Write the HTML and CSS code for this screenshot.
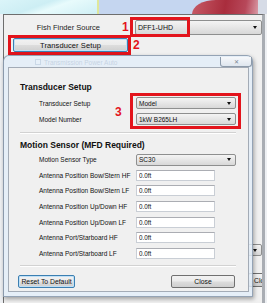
FILE: index.html
```html
<!DOCTYPE html>
<html lang="en">
<head>
    <meta charset="UTF-8">
    <meta name="viewport" content="width=device-width, initial-scale=1.0">
    <title>Transducer Setup</title>
    <link rel="stylesheet" href="styles.css">
</head>
<body>
    <div class="desktop">
        <div class="wallpaper">
            <span class="wp-sky"></span>
            <span class="wp-line"></span>
            <span class="wp-blue"></span>
            <span class="wp-red"></span>
            <span class="wp-end"></span>
        </div>

        <!-- back window -->
        <div class="main-window">
            <div class="source-row">
                <span class="source-label">Fish Finder Source</span>
                <div class="combo combo-source"><span>DFF1-UHD</span><i class="arrow"></i></div>
            </div>
            <button class="btn btn-setup">Transducer Setup</button>
            <div class="check-row"><span class="check"></span>Transmission Power Auto</div>
            <div class="combo combo-back"><span></span><i class="arrow"></i></div>
            <button class="btn btn-back-close">Close</button>

            <div class="mark mark-box1"></div>
            <div class="mark mark-box2"></div>
            <span class="mark-num num1">1</span>
            <span class="mark-num num2">2</span>
        </div>

        <!-- dialog -->
        <div class="dialog">
            <div class="titlebar">
                <span class="close-btn">&#10005;</span>
            </div>
            <div class="client">
                <h3 class="group-title">Transducer Setup</h3>
                <div class="form-grid transducer-grid">
                    <label>Transducer Setup</label>
                    <div class="combo"><span>Model</span><i class="arrow"></i></div>
                    <label>Model Number</label>
                    <div class="combo"><span>1kW B265LH</span><i class="arrow"></i></div>
                </div>
                <hr class="sep">

                <h3 class="group-title second">Motion Sensor (MFD Required)</h3>
                <div class="form-grid motion-grid">
                    <label>Motion Sensor Type</label>
                    <div class="combo"><span>SC30</span><i class="arrow"></i></div>
                    <label>Antenna Position Bow/Stern HF</label>
                    <input class="field" type="text" value="0.0ft">
                    <label>Antenna Position Bow/Stern LF</label>
                    <input class="field" type="text" value="0.0ft">
                    <label>Antenna Position Up/Down HF</label>
                    <input class="field" type="text" value="0.0ft">
                    <label>Antenna Position Up/Down LF</label>
                    <input class="field" type="text" value="0.0ft">
                    <label>Antenna Port/Starboard HF</label>
                    <input class="field" type="text" value="0.0ft">
                    <label>Antenna Port/Starboard LF</label>
                    <input class="field" type="text" value="0.0ft">
                </div>
                <hr class="sep sep-bottom">

                <div class="footer">
                    <button class="btn btn-reset">Reset To Default</button>
                    <button class="btn btn-close">Close</button>
                </div>

                <div class="mark mark-box3"></div>
                <span class="mark-num num3">3</span>
            </div>
        </div>
    </div>
</body>
</html>
```

FILE: styles.css
```css
body {
    margin: 0;
    font-family: "Liberation Sans", Arial, sans-serif;
}

.desktop {
    position: relative;
    width: 267px;
    height: 303px;
    overflow: hidden;
    background: #eef0f3;
}

/* wallpaper strip above the windows */
.wallpaper {
    display: flex;
    height: 14px;
    background: #c5d6f0;
}

.wp-sky {
    width: 97px;
    background: linear-gradient(160deg, #dbf5f9 0%, #cdeef4 40%, #e8fbfc 55%, #cfeff5 100%);
}

.wp-line {
    width: 2px;
    background: #dfe79a;
}

.wp-blue {
    width: 93px;
    background: #c5d6f0;
}

.wp-red {
    width: 66px;
    background: linear-gradient(100deg, #c65a66, #a92d3d 50%, #b7485a 80%, #d99aa6);
    border-top-left-radius: 24px 14px;
}

.wp-end {
    flex: 1;
    background: #d6dbe6;
}

/* back window */
.main-window {
    position: absolute;
    left: 3px;
    top: 14px;
    width: 262px;
    height: 289px;
    box-sizing: border-box;
    border-top: 1px solid #6e6e6e;
    border-left: 1px solid #6e6e6e;
    border-right: 3px solid #a9adb3;
    background: #f0f0f0;
    overflow: hidden;
}

.source-row {
    display: flex;
    align-items: center;
    height: 16px;
    margin-top: 4px;
    font-size: 7.5px;
    color: #1e1e1e;
}

.source-label {
    width: 96px;
    text-align: right;
}

.combo {
    box-sizing: border-box;
    display: flex;
    align-items: center;
    justify-content: space-between;
    width: 100px;
    height: 12px;
    padding: 0 4px 0 2px;
    border: 1px solid #8e8f8f;
    border-radius: 2px;
    background: linear-gradient(#f4f4f4, #e6e6e6 50%, #d8d8d8);
    font-size: 6.5px;
    color: #111;
}

.combo-source {
    margin-left: 35px;
    width: 127px;
    height: 15px;
    font-size: 7px;
}

.arrow {
    width: 0;
    height: 0;
    border-left: 2.5px solid transparent;
    border-right: 2.5px solid transparent;
    border-top: 3px solid #111;
}

.btn {
    box-sizing: border-box;
    padding: 0;
    border: 1px solid #707070;
    border-radius: 2px;
    background: linear-gradient(#f2f2f2, #ebebeb 48%, #dddddd 52%, #cfcfcf);
    font-family: "Liberation Sans", Arial, sans-serif;
    color: #111;
}

.btn-setup {
    display: block;
    margin: 3px 0 0 9px;
    width: 115px;
    height: 14px;
    border-color: #3c7fb1;
    box-shadow: inset 0 0 0 1px #bfe0f7;
    font-size: 7.5px;
    letter-spacing: 0.1px;
}

.check-row {
    display: flex;
    align-items: center;
    gap: 3px;
    height: 8px;
    margin: 6px 0 0 31px;
    font-size: 6.5px;
    color: #28406a;
}

.check {
    width: 4px;
    height: 4px;
    border: 1px solid #4a6a90;
    background: #fff;
}

.combo-back {
    margin: 178px 0 0 200px;
    width: 58px;
}

.btn-back-close {
    display: block;
    margin: 17px 0 0 244px;
    width: 60px;
    height: 14px;
    padding-left: 5px;
    text-align: left;
    font-size: 6.8px;
}

/* red annotations */
.mark {
    position: absolute;
    box-sizing: border-box;
    border: 3px solid #e3141c;
}

.mark-num {
    position: absolute;
    font: bold 12px/12px "Liberation Sans", Arial, sans-serif;
    color: #e3141c;
}

.mark-box1 { left: 126px; top: 2px; width: 60px; height: 20px; }
.mark-box2 { left: 4px; top: 20px; width: 123px; height: 20px; }
.num1 { left: 118px; top: 6px; }
.num2 { left: 129px; top: 24px; }

/* dialog */
.dialog {
    position: absolute;
    left: 3px;
    top: 55px;
    width: 250px;
    height: 242px;
    box-sizing: border-box;
    display: flex;
    flex-direction: column;
    padding: 0 3px 4px 4px;
    border: 1px solid rgba(80, 100, 125, 0.55);
    border-radius: 6px 6px 0 0;
    background: rgba(226, 237, 248, 0.84);
    box-shadow: 1px 2px 4px rgba(0, 0, 0, 0.35);
}

.titlebar {
    display: flex;
    justify-content: flex-end;
    height: 11px;
    margin-right: -3px;
}

.close-btn {
    box-sizing: border-box;
    display: flex;
    align-items: center;
    justify-content: center;
    width: 32px;
    height: 10px;
    margin-top: 1px;
    border: 1px solid #8d9bab;
    border-top: none;
    border-radius: 0 0 3px 3px;
    background: linear-gradient(#f6f8fb, #dfe6ee);
    font-size: 6px;
    color: #7a8594;
}

.client {
    position: relative;
    flex: 1;
    box-sizing: border-box;
    border: 1px solid #a3abb6;
    background: #f0f0f0;
    font-size: 6.5px;
    color: #111;
}

.group-title {
    margin: 13px 0 0 11px;
    font-size: 8.5px;
    font-weight: bold;
    line-height: 12px;
}

.group-title.second {
    margin-top: 5px;
}

.form-grid {
    display: grid;
    grid-template-columns: 97px 100px;
    align-items: center;
    padding-left: 30px;
}

.transducer-grid {
    margin-top: 2px;
    grid-auto-rows: 16px;
}

.motion-grid {
    margin-top: 1px;
    grid-auto-rows: 15.6px;
}

.field {
    box-sizing: border-box;
    width: 79px;
    height: 11px;
    margin: 0;
    padding: 0 2px;
    border: 1px solid #c9ced5;
    border-top-color: #abadb3;
    background: #fff;
    font-family: "Liberation Sans", Arial, sans-serif;
    font-size: 6.3px;
    color: #111;
}

.sep {
    width: 216px;
    height: 0;
    margin: 5px 0 0 11px;
    border: none;
    border-top: 1px solid #d2d2d2;
    border-bottom: 1px solid #fff;
}

.sep-bottom {
    margin-top: 4px;
}

.footer {
    display: flex;
    justify-content: space-between;
    margin-top: 8px;
    padding: 0 13px 0 9px;
}

.btn-reset {
    width: 57px;
    height: 13px;
    border-color: #3c7fb1;
    box-shadow: inset 0 0 0 1px #bfe0f7;
    font-size: 6.8px;
}

.btn-close {
    width: 64px;
    height: 13px;
    font-size: 6.8px;
}

.mark-box3 { left: 121px; top: 25px; width: 111px; height: 36px; }
.num3 { left: 106px; top: 38px; }
```
